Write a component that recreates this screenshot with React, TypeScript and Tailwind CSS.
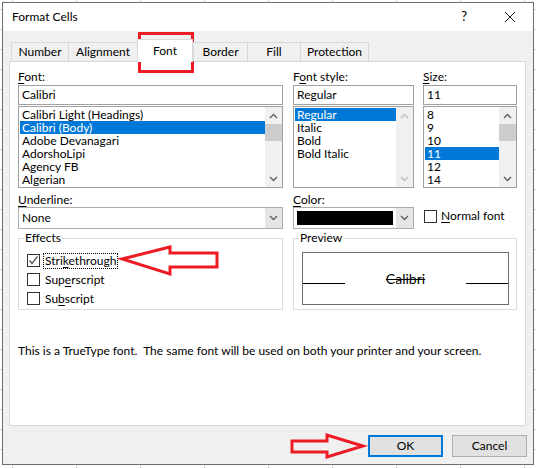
import React from 'react';

const FONT = { fontFamily: '"Segoe UI", Lato, "Noto Sans", sans-serif' };

const Acc = ({ children }: { children: React.ReactNode }) => (
  <span className="underline decoration-1 underline-offset-[2px]">{children}</span>
);

const Chevron = ({ dir, color }: { dir: 'up' | 'down'; color: string }) => (
  <svg width="9" height="6" viewBox="0 0 9 6">
    <path
      d={dir === 'up' ? 'M1 5 L4.5 1.5 L8 5' : 'M1 1 L4.5 4.5 L8 1'}
      stroke={color}
      strokeWidth="1.4"
      fill="none"
    />
  </svg>
);

const ScrollBar = ({ disabled }: { disabled?: boolean }) => {
  const c = disabled ? '#bfbfbf' : '#606060';
  return (
    <div className="flex w-[17px] flex-col bg-[#f0f0f0]">
      <div className="flex h-[17px] items-center justify-center">
        <Chevron dir="up" color={c} />
      </div>
      {!disabled && <div className="h-[17px] bg-[#cdcdcd]" />}
      <div className="flex-1" />
      <div className="flex h-[17px] items-center justify-center">
        <Chevron dir="down" color={c} />
      </div>
    </div>
  );
};

const ListBox = ({ items, selected, disabledScroll }: { items: string[]; selected: number; disabledScroll?: boolean }) => (
  <div className="mt-[1px] flex h-[82px] border border-[#a0a0a0] bg-white">
    <div className="flex-1 py-[1px] pl-[1px]">
      {items.map((t, i) => (
        <div
          key={t}
          className={`h-[13px] pl-[2px] text-[12px] leading-[13px] ${i === selected ? 'bg-[#0078d7] text-white' : 'text-black'}`}
        >
          {t}
        </div>
      ))}
    </div>
    <ScrollBar disabled={disabledScroll} />
  </div>
);

const TextBox = ({ value }: { value: string }) => (
  <div className="mt-[1px] flex h-[20px] items-center border border-[#a0a0a0] bg-white pl-[3px] text-[12px]">{value}</div>
);

const DropButton = () => (
  <div className="flex w-[17px] items-center justify-center bg-[#e5e5e5]">
    <Chevron dir="down" color="#606060" />
  </div>
);

const CheckBox = ({ checked }: { checked?: boolean }) => (
  <div className="flex h-[13px] w-[13px] items-center justify-center border border-[#333333] bg-white">
    {checked && (
      <svg width="11" height="11" viewBox="0 0 11 11">
        <path d="M1.5 5.5 L4 8.5 L9.5 1.5" stroke="#555555" strokeWidth="1.3" fill="none" />
      </svg>
    )}
  </div>
);

const Tab = ({ label, w, active }: { label: string; w: number; active?: boolean }) => (
  <div
    style={{ width: w }}
    className={
      active
        ? 'flex h-[23px] items-center justify-center border-x border-t border-[#d9d9d9] bg-white text-[12px]'
        : 'mb-[1px] flex h-[19px] items-center justify-center border-t border-l border-[#d9d9d9] bg-[#f0f0f0] text-[12px] last:border-r'
    }
  >
    {label}
  </div>
);

export default function App() {
  return (
    <div
      style={FONT}
      className="relative h-[468px] w-[536px] overflow-hidden bg-white bg-[linear-gradient(to_right,#d4d4d4_1px,transparent_1px),linear-gradient(to_bottom,#d4d4d4_1px,transparent_1px)] bg-[size:64px_20px] bg-[position:12px_9px] pl-[2px] pt-[2px] text-black"
    >
      <div className="flex h-[463px] w-[532px] flex-col border border-[#6d6d6d] bg-[#f0f0f0]">
        {/* title bar */}
        <div className="flex h-[28px] items-center bg-white pl-[9px] text-[12px]">
          <span>Format Cells</span>
          <span className="ml-auto text-[13px]">?</span>
          <svg className="ml-[38px] mr-[18px]" width="10" height="10" viewBox="0 0 10 10">
            <path d="M0 0 L10 10 M10 0 L0 10" stroke="#111" strokeWidth="1" />
          </svg>
        </div>

        {/* tabs */}
        <div className="relative z-10 ml-[8px] mt-[8px] flex h-[23px] items-end">
          <Tab label="Number" w={57} />
          <Tab label="Alignment" w={69} />
          <Tab label="Font" w={56} active />
          <Tab label="Border" w={54} />
          <Tab label="Fill" w={53} />
          <Tab label="Protection" w={69} />
        </div>

        {/* panel */}
        <div className="-mt-[1px] ml-[6px] flex h-[365px] w-[517px] flex-col border border-[#d9d9d9] bg-white pl-[8px] pt-[8px] text-[12px]">
          <div className="flex">
            <div className="w-[265px]">
              <div className="h-[14px] leading-[14px]">
                <Acc>F</Acc>ont:
              </div>
              <TextBox value="Calibri" />
              <ListBox
                items={['Calibri Light (Headings)', 'Calibri (Body)', 'Adobe Devanagari', 'AdorshoLipi', 'Agency FB', 'Algerian']}
                selected={1}
              />
            </div>
            <div className="ml-[10px] w-[121px]">
              <div className="h-[14px] leading-[14px]">
                F<Acc>o</Acc>nt style:
              </div>
              <TextBox value="Regular" />
              <ListBox items={['Regular', 'Italic', 'Bold', 'Bold Italic']} selected={0} disabledScroll />
            </div>
            <div className="ml-[9px] w-[94px]">
              <div className="h-[14px] leading-[14px]">
                <Acc>S</Acc>ize:
              </div>
              <TextBox value="11" />
              <ListBox items={['8', '9', '10', '11', '12', '14']} selected={3} />
            </div>
          </div>

          <div className="mt-[5px] flex items-end">
            <div className="w-[265px]">
              <div className="h-[14px] leading-[14px]">
                <Acc>U</Acc>nderline:
              </div>
              <div className="flex h-[22px] border border-[#adadad] bg-white">
                <div className="flex flex-1 items-center pl-[3px]">None</div>
                <DropButton />
              </div>
            </div>
            <div className="ml-[10px] w-[121px]">
              <div className="h-[14px] leading-[14px]">
                <Acc>C</Acc>olor:
              </div>
              <div className="flex h-[22px] border border-[#adadad] bg-white">
                <div className="flex flex-1 p-[3px]">
                  <div className="flex-1 bg-black" />
                </div>
                <DropButton />
              </div>
            </div>
            <div className="mb-[4px] ml-[10px] flex items-center">
              <CheckBox />
              <span className="ml-[4px]">
                <Acc>N</Acc>ormal font
              </span>
            </div>
          </div>

          <div className="mt-[9px] flex">
            <div className="relative h-[72px] w-[265px] border border-[#dcdcdc] pl-[8px] pt-[12px]">
              <span className="absolute -top-[8px] left-[5px] bg-white px-[1px] leading-[14px]">Effects</span>
              <div className="flex h-[19px] items-center">
                <CheckBox checked />
                <span className="ml-[3px] border border-dotted border-black px-[1px] leading-[14px]">
                  Stri<Acc>k</Acc>ethrough
                </span>
              </div>
              <div className="flex h-[19px] items-center">
                <CheckBox />
                <span className="ml-[4px] px-[1px]">
                  Sup<Acc>e</Acc>rscript
                </span>
              </div>
              <div className="flex h-[19px] items-center">
                <CheckBox />
                <span className="ml-[4px] px-[1px]">
                  Su<Acc>b</Acc>script
                </span>
              </div>
            </div>
            <div className="relative ml-[10px] h-[72px] w-[224px] border border-[#dcdcdc] pl-[8px] pt-[13px]">
              <span className="absolute -top-[8px] left-[5px] bg-white px-[1px] leading-[14px]">Preview</span>
              <div className="h-[53px] w-[207px] border border-[#6d6d6d] pt-[18px]">
                <div className="flex items-baseline">
                  <div className="h-[1px] w-[42px] bg-black" />
                  <span className="flex-1 text-center text-[14px] leading-[16px] line-through">Calibri</span>
                  <div className="h-[1px] w-[42px] bg-black" />
                </div>
              </div>
            </div>
          </div>

          <div className="mt-[34px] leading-[14px]">
            This is a TrueType font.&nbsp; The same font will be used on both your printer and your screen.
          </div>
        </div>

        {/* buttons */}
        <div className="mr-[6px] mt-[9px] flex justify-end gap-[9px] text-[12px]">
          <div className="flex h-[22px] w-[75px] items-center justify-center border-2 border-[#0078d7] bg-[#e1e1e1]">OK</div>
          <div className="flex h-[22px] w-[75px] items-center justify-center border border-[#adadad] bg-[#e1e1e1]">Cancel</div>
        </div>
      </div>

      {/* annotations */}
      <svg className="pointer-events-none absolute left-0 top-0" width="536" height="468" viewBox="0 0 536 468">
        <rect x="139.5" y="33.5" width="53" height="38" stroke="#ed1c24" strokeWidth="3" fill="none" />
        <polygon
          points="122,259 170,247 170,253 217,253 217,267 170,267 170,274"
          stroke="#ed1c24"
          strokeWidth="3"
          fill="none"
          strokeLinejoin="miter"
        />
        <polygon
          points="292,441 327,441 327,435 363,446 327,457 327,452 292,452"
          stroke="#ed1c24"
          strokeWidth="3"
          fill="none"
        />
      </svg>
    </div>
  );
}
